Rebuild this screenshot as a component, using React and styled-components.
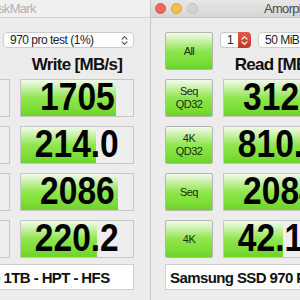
import React from 'react';
import styled, { createGlobalStyle } from 'styled-components';

const Global = createGlobalStyle`
  html, body { margin: 0; padding: 0; }
  body {
    width: 300px;
    height: 300px;
    overflow: hidden;
    background: #ececec;
    font-family: "Liberation Sans", Arial, sans-serif;
  }
`;

const Desktop = styled.div`
  display: flex;
  width: 300px;
  height: 300px;
  overflow: hidden;
`;

const Frame = styled.div`
  flex: ${p => (p.$front ? '1 1 auto' : '0 0 150px')};
  display: flex;
  justify-content: ${p => (p.$front ? 'flex-start' : 'flex-end')};
  overflow: hidden;
  border-left: ${p => (p.$front ? '1px solid #c6c6c6' : 'none')};
`;

const Window = styled.div`
  flex: 0 0 326px;
  width: 326px;
  height: 300px;
  background: #ececec;
`;

const TitleBar = styled.div`
  height: 17px;
  display: flex;
  align-items: center;
  padding-left: 4px;
  border-bottom: 1px solid ${p => (p.$active ? '#c4c4c4' : '#d4d4d4')};
  background: ${p => (p.$active ? 'linear-gradient(#e7e7e7, #d6d6d6)' : '#f0f0f0')};
`;

const Lights = styled.div`
  display: flex;
  gap: 5px;
`;

const Light = styled.span`
  width: 11px;
  height: 11px;
  border-radius: 50%;
  box-sizing: border-box;
  background: ${p => p.$color};
  border: 1px solid ${p => p.$edge};
`;

const Title = styled.span`
  margin-left: ${p => p.$offset}px;
  font-size: 13px;
  letter-spacing: -0.7px;
  color: ${p => (p.$active ? '#4a4a4a' : '#b2b2b2')};
  white-space: nowrap;
`;

const Body = styled.div`
  display: grid;
  grid-template-columns: 48px 114px 114px;
  grid-template-rows: 16px 13px repeat(4, 38px) 23px;
  column-gap: 10px;
  row-gap: 9px;
  padding: 14px 16px 0 14px;
`;

const greenFace = `linear-gradient(to bottom, #f2faec 0%, #c9f1a8 22%, #8fe64e 50%, #7cde37 80%, #6dd22b 100%)`;

const GreenButton = styled.div`
  grid-row: ${p => p.$row};
  box-sizing: border-box;
  border: 1px solid #b4b4b4;
  border-radius: 2px;
  background: ${greenFace};
  display: flex;
  flex-direction: column;
  align-items: center;
  justify-content: center;
  font-size: 11px;
  line-height: 13px;
  letter-spacing: -0.6px;
  color: #1c2a14;
`;

const Controls = styled.div`
  grid-column: 2 / 4;
  grid-row: 1;
  margin-left: -3px;
  display: flex;
  gap: 7px;
`;

const Stepper = styled.div`
  flex: 0 0 31px;
  display: flex;
`;

const StepNum = styled.div`
  flex: 1;
  box-sizing: border-box;
  background: #fff;
  border: 1px solid #c9c9c9;
  border-right: none;
  border-radius: 4px 0 0 4px;
  font-size: 12px;
  line-height: 14px;
  padding-left: 6px;
  color: #222;
`;

const StepArrows = styled.div`
  flex: 0 0 13px;
  border-radius: 0 4px 4px 0;
  background: linear-gradient(#de5a47, #c0392b);
  display: flex;
  align-items: center;
  justify-content: center;
`;

const Select = styled.div`
  flex: ${p => (p.$grow ? '1' : '0 0 65px')};
  box-sizing: border-box;
  background: #fff;
  border: 1px solid #cdcdcd;
  border-radius: 4px;
  display: flex;
  align-items: center;
  justify-content: space-between;
  padding: 0 5px 0 6px;
  font-size: 12px;
  letter-spacing: -0.5px;
  color: #222;
  white-space: nowrap;
`;

const Heading = styled.div`
  grid-row: 2;
  grid-column: ${p => p.$col};
  text-align: center;
  font-weight: bold;
  font-size: 17px;
  line-height: 15px;
  letter-spacing: -0.7px;
  color: #111;
  white-space: nowrap;
`;

const Cell = styled.div`
  grid-row: ${p => p.$row};
  box-sizing: border-box;
  border: 1px solid #c7c7c7;
  background-color: #eeeeee;
  background-image: ${greenFace};
  background-repeat: no-repeat;
  display: flex;
  align-items: center;
  justify-content: center;
  padding-bottom: 3px;
  overflow: hidden;
`;

const Value = styled.span`
  display: inline-block;
  font-weight: bold;
  font-size: 39px;
  line-height: 34px;
  color: #000;
  transform: scaleX(0.86);
  white-space: nowrap;
`;

const Field = styled.div`
  grid-column: 1 / -1;
  grid-row: 7;
  margin-top: -3px;
  box-sizing: border-box;
  background: #fff;
  border: 1px solid #cfcfcf;
  display: flex;
  align-items: center;
  padding-left: 4px;
  font-weight: bold;
  font-size: 15px;
  letter-spacing: -0.6px;
  color: #111;
  white-space: nowrap;
  overflow: hidden;
`;

const UpDown = ({ color }) => (
  <svg width="7" height="11" viewBox="0 0 7 11">
    <path d="M1 4.2 L3.5 1.7 L6 4.2 M1 6.8 L3.5 9.3 L6 6.8" fill="none" stroke={color} strokeWidth="1.2" strokeLinecap="round" strokeLinejoin="round" />
  </svg>
);

const labels = [['Seq', 'QD32'], ['4K', 'QD32'], ['Seq'], ['4K']];

const windows = [
  {
    active: false,
    titleOffset: 56,
    rows: [
      { read: '3122', readPct: 86, write: '1705', writePct: 85 },
      { read: '811.2', readPct: 78, write: '214.0', writePct: 67 },
      { read: '2079', readPct: 86, write: '2086', writePct: 87 },
      { read: '41.93', readPct: 52, write: '220.2', writePct: 68 },
    ],
  },
  {
    active: true,
    titleOffset: 66,
    rows: [
      { read: '3126', readPct: 88, write: '1711', writePct: 85 },
      { read: '810.5', readPct: 79, write: '213.7', writePct: 67 },
      { read: '2084', readPct: 87, write: '2090', writePct: 87 },
      { read: '42.15', readPct: 53, write: '219.8', writePct: 68 },
    ],
  },
];

function DiskMark({ data }) {
  return (
    <Window>
      <TitleBar $active={data.active}>
        <Lights>
          <Light $color={data.active ? '#ee6a5f' : '#d6d6d6'} $edge={data.active ? '#d8594e' : '#c4c4c4'} />
          <Light $color={data.active ? '#f5be4f' : '#d6d6d6'} $edge={data.active ? '#d9a43c' : '#c4c4c4'} />
          <Light $color="#d3d3d3" $edge="#c0c0c0" />
        </Lights>
        <Title $active={data.active} $offset={data.titleOffset}>AmorphousDiskMark</Title>
      </TitleBar>
      <Body>
        <GreenButton $row="1 / 3">All</GreenButton>
        <Controls>
          <Stepper>
            <StepNum>1</StepNum>
            <StepArrows><UpDown color="#fff" /></StepArrows>
          </Stepper>
          <Select>50 MiB<UpDown color="#555" /></Select>
          <Select $grow>970 pro test (1%)<UpDown color="#555" /></Select>
        </Controls>
        <Heading $col={2}>Read [MB/s]</Heading>
        <Heading $col={3}>Write [MB/s]</Heading>
        {data.rows.map((r, i) => (
          <React.Fragment key={i}>
            <GreenButton $row={i + 3}>
              {labels[i].map(l => <span key={l}>{l}</span>)}
            </GreenButton>
            <Cell $row={i + 3} style={{ backgroundSize: `${r.readPct}% 100%` }}>
              <Value>{r.read}</Value>
            </Cell>
            <Cell $row={i + 3} style={{ backgroundSize: `${r.writePct}% 100%` }}>
              <Value>{r.write}</Value>
            </Cell>
          </React.Fragment>
        ))}
        <Field>Samsung SSD 970 PRO 1TB - HPT - HFS</Field>
      </Body>
    </Window>
  );
}

export default function App() {
  return (
    <>
      <Global />
      <Desktop>
        <Frame>
          <DiskMark data={windows[0]} />
        </Frame>
        <Frame $front>
          <DiskMark data={windows[1]} />
        </Frame>
      </Desktop>
    </>
  );
}
